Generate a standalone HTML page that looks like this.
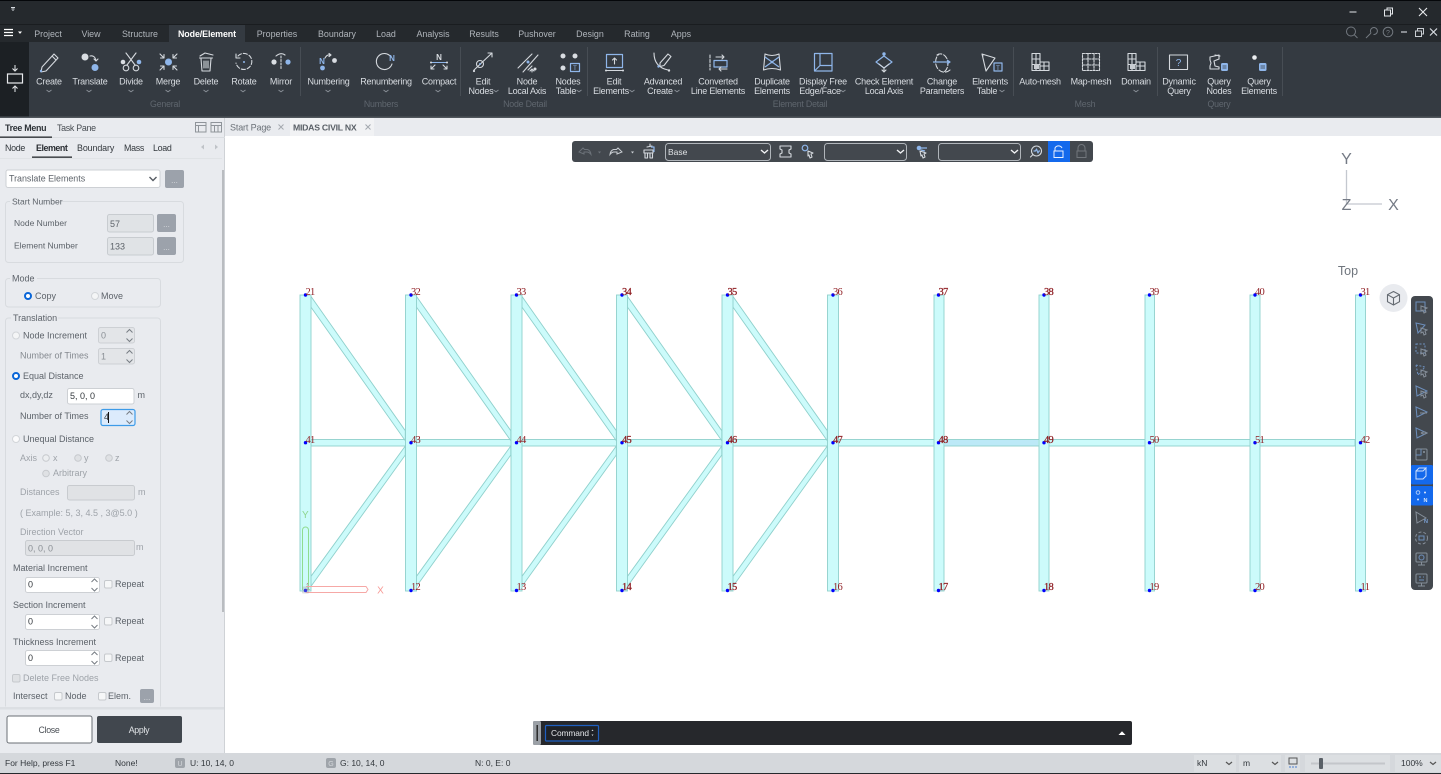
<!DOCTYPE html>
<html lang="en"><head><meta charset="utf-8"><title>MIDAS CIVIL NX</title>
<style>
html,body{margin:0;padding:0;background:#fff;width:1441px;height:774px;overflow:hidden}
svg{display:block;font-family:"Liberation Sans",sans-serif;filter:blur(.3px)}
.t{font-size:8.9px;fill:#b0b5bb;text-anchor:middle}
.r{font-size:9px;fill:#d9dde2;text-anchor:middle;letter-spacing:-.22px}
.g{font-size:8.8px;fill:#5f666e;text-anchor:middle;letter-spacing:-.2px}
.p{font-size:9px;fill:#5d636a}
.dk{font-size:9px;fill:#33383d}
.dis{font-size:9px;fill:#9ea3a9}
.n{font-family:"Liberation Serif",serif;font-size:10.5px;fill:#8f1d22;letter-spacing:-.7px}
.nb{stroke:#8f1d22;stroke-width:.25}
.i{fill:none;stroke:#d5d9de;stroke-width:1.1;stroke-linecap:round;stroke-linejoin:round}
.b{fill:none;stroke:#8fb6ea;stroke-width:1.2;stroke-linejoin:round}
.w{fill:#d9dde2}.u{fill:#8fb6ea}
.si{fill:none;stroke:#868f9a;stroke-width:1}
.sb{fill:none;stroke:#6d8fbc;stroke-width:1}
.col{fill:#ccfbfb;stroke:#8fd0cc;stroke-width:.9}
.s{font-size:8.5px;fill:#33383d}
.st{font-size:8.9px;letter-spacing:-.3px}
</style></head><body>
<svg width="1441" height="774" viewBox="0 0 1441 774" xmlns="http://www.w3.org/2000/svg">
<defs>
<path id="ch" d="M-2.5 0 L0 1.8 L2.5 0" fill="none" stroke="#8a9097" stroke-width=".9"/>
<path id="dc" d="M-3.5 -1.5 L0 2 L3.5 -1.5" fill="none" stroke="#555b62" stroke-width="1.4"/>
<g id="spin"><path d="M-3 -3 L0 -6 L3 -3 M-3 3 L0 6 L3 3" fill="none" stroke="#777d84" stroke-width="1"/></g>
<g id="db"><rect width="19" height="18" rx="2" fill="#9ca2ab"/><text x="9.5" y="13" font-size="8" fill="#d7dade" text-anchor="middle">...</text></g>
<g id="diag"><polygon class="col" points="310.7,296 405.3,430.7 405.3,440.7 310.7,306.7"/><polygon class="col" points="405.3,446 310.7,576.7 310.7,586.7 405.3,455"/></g>
<g id="node"><circle r="1.7" fill="#0000ff"/></g>
</defs>

<!-- base -->
<rect width="1441" height="774" fill="#fff"/>
<!-- title + tab bars -->
<rect width="1441" height="42" fill="#25292d"/>
<rect width="1441" height="1" fill="#05070a"/>
<rect y="24" width="1441" height="1" fill="#1a1d20"/>
<rect y="42" width="1441" height="75" fill="#343a41"/>
<rect y="42" width="29" height="75" fill="#1c2024"/>
<rect y="116.5" width="1441" height="1.5" fill="#50565c"/>
<rect x="169" y="25" width="76" height="17" fill="#343a41"/>
<path d="M11 7.5h4M11.5 9h3M12.5 10.5h1" stroke="#d9dde2" stroke-width="1"/>
<path d="M4 29.5h9M4 32.5h9M4 35.5h9" stroke="#fff" stroke-width="1.3"/><path d="M18 31.5h4l-2 2.4z" fill="#fff"/>
<path d="M1349.5 12h7M1384.5 10h6v6h-6zM1387 10v-2h5.500v6h-1.500" stroke="#e4e7ea" fill="none"/>
<path d="M1419 8l8 8M1427 8l-8 8" stroke="#e8eaed" stroke-width="1.100"/>
<circle cx="1351" cy="31.500" r="4.500" fill="none" stroke="#737980"/><path d="M1354.500 35l3 3" stroke="#737980"/>
<path d="M1366 38l5-5M1371 33a3.500 3.500 0 1 1 2.500 1.500" fill="none" stroke="#737980"/>
<circle cx="1388" cy="32" r="4.800" fill="none" stroke="#737980"/><text x="1388" y="35" font-size="7" fill="#737980" text-anchor="middle">?</text>
<path d="M1401 32h6" stroke="#c9cdd2" stroke-width="1.200"/><path d="M1415.500 31h6v5.500h-6zM1417.500 31v-2.500h6v5.500h-2" fill="none" stroke="#c9cdd2"/><path d="M1430 28.500l7 7M1437 28.500l-7 7" stroke="#d9dde2" stroke-width="1.200"/>

<text class="t" x="48" y="37">Project</text><text class="t" x="91" y="37">View</text><text class="t" x="140" y="37">Structure</text>
<text class="t" x="207" y="37" style="font-weight:700;fill:#fff;letter-spacing:-.1px">Node/Element</text>
<text class="t" x="277" y="37">Properties</text><text class="t" x="337" y="37">Boundary</text><text class="t" x="386" y="37">Load</text><text class="t" x="433" y="37">Analysis</text><text class="t" x="484" y="37">Results</text><text class="t" x="537" y="37">Pushover</text><text class="t" x="590" y="37">Design</text><text class="t" x="637" y="37">Rating</text><text class="t" x="681" y="37">Apps</text>

<!-- left ribbon strip -->
<rect x="7.500" y="74" width="15" height="9" fill="none" stroke="#e9ebee" stroke-width="1.200"/>
<path d="M15 65v5M12.500 68.500l2.500 2.500l2.500-2.500M15 92v-5M12.500 88.500l2.500-2.500l2.500 2.500" fill="none" stroke="#e9ebee"/>

<!-- ribbon separators -->
<g stroke="#474d54"><path d="M300.500 47v49M460.500 47v49M587.500 47v49M1013.500 47v49M1157.500 47v49M1282.500 47v49"/></g>
<!-- ribbon labels -->
<text class="r" x="49" y="84.500">Create</text><text class="r" x="90" y="84.500">Translate</text><text class="r" x="131" y="84.500">Divide</text><text class="r" x="168" y="84.500">Merge</text><text class="r" x="206" y="84.500">Delete</text><text class="r" x="244" y="84.500">Rotate</text><text class="r" x="281" y="84.500">Mirror</text>
<text class="r" x="328.500" y="84.500">Numbering</text><text class="r" x="386" y="84.500">Renumbering</text><text class="r" x="439" y="84.500">Compact</text>
<text class="r" x="483" y="84.500">Edit</text><text class="r" x="481" y="94">Nodes</text>
<text class="r" x="527" y="84.500">Node</text><text class="r" x="527" y="94">Local Axis</text>
<text class="r" x="568" y="84.500">Nodes</text><text class="r" x="566" y="94">Table</text>
<text class="r" x="614" y="84.500">Edit</text><text class="r" x="611" y="94">Elements</text>
<text class="r" x="663" y="84.500">Advanced</text><text class="r" x="660" y="94">Create</text>
<text class="r" x="718" y="84.500">Converted</text><text class="r" x="718" y="94">Line Elements</text>
<text class="r" x="772" y="84.500">Duplicate</text><text class="r" x="772" y="94">Elements</text>
<text class="r" x="823" y="84.500">Display Free</text><text class="r" x="820" y="94">Edge/Face</text>
<text class="r" x="884" y="84.500">Check Element</text><text class="r" x="884" y="94">Local Axis</text>
<text class="r" x="942" y="84.500">Change</text><text class="r" x="942" y="94">Parameters</text>
<text class="r" x="990" y="84.500">Elements</text><text class="r" x="987" y="94">Table</text>
<text class="r" x="1040" y="84.500">Auto-mesh</text><text class="r" x="1091" y="84.500">Map-mesh</text><text class="r" x="1136" y="84.500">Domain</text>
<text class="r" x="1179" y="84.500">Dynamic</text><text class="r" x="1179" y="94">Query</text>
<text class="r" x="1219" y="84.500">Query</text><text class="r" x="1219" y="94">Nodes</text>
<text class="r" x="1259" y="84.500">Query</text><text class="r" x="1259" y="94">Elements</text>
<text class="g" x="165" y="107">General</text><text class="g" x="381" y="107">Numbers</text><text class="g" x="525" y="107">Node Detail</text><text class="g" x="800" y="107">Element Detail</text><text class="g" x="1085" y="107">Mesh</text><text class="g" x="1219" y="107">Query</text>
<!-- chevrons -->
<use href="#ch" x="49" y="90"/><use href="#ch" x="89" y="90"/><use href="#ch" x="131" y="90"/><use href="#ch" x="168" y="90"/><use href="#ch" x="206" y="90"/><use href="#ch" x="243" y="90"/><use href="#ch" x="281" y="90"/><use href="#ch" x="328" y="90"/><use href="#ch" x="386" y="90"/><use href="#ch" x="438" y="90"/><use href="#ch" x="1136" y="90"/>
<use href="#ch" x="496" y="90"/><use href="#ch" x="579" y="90"/><use href="#ch" x="632" y="90"/><use href="#ch" x="677" y="90"/><use href="#ch" x="843" y="90"/><use href="#ch" x="1002" y="90"/>

<!-- ribbon icons -->
<path class="i" d="M42 67l12-13 4 4-12 13-5 1z M52 56l4 4"/><circle cx="41" cy="71" r="1.200" class="u"/>
<circle cx="85" cy="57" r="3.500" class="w"/><circle cx="95" cy="67.500" r="3.500" class="u"/><path class="i" d="M90 56q5-1 6 5M94 59l2 2 2-2"/>
<path class="i" d="M126 53l9 12M136 53l-9 12"/><circle class="i" cx="126" cy="68" r="2.800"/><circle class="i" cx="136" cy="68" r="2.800"/><circle cx="123" cy="62" r="2.300" class="w"/><circle cx="139" cy="62" r="2.300" class="u"/>
<circle cx="168.500" cy="62" r="3.500" class="u"/><path class="i" d="M160 54l4 4M164 54.500v3.500h-3.500M177 54l-4 4M173 54.500v3.500h3.500M160 70l4-4M164 69.500v-3.500h-3.500M177 70l-4-4M173 69.500v-3.500h3.500"/>
<path class="i" d="M199.500 58h13M201 58.500l1 12.500h8l1-12.500M204 61v7M206 61v7M208 61v7M200 56l5-3 8 2"/>
<path class="i" stroke-dasharray="4 2" d="M238 56a8 8 0 1 1 -2 7"/><path class="i" d="M236 54v4h4"/><circle cx="244" cy="62" r="1" class="u"/>
<circle cx="274" cy="62" r="2.600" class="w"/><circle cx="288" cy="62" r="2.600" class="u"/><path class="i" stroke-dasharray="2 1.500" d="M281 56v14"/><path class="i" d="M276 56q5-4 9-1"/>
<text x="322" y="64" font-size="8" font-weight="700" fill="#8fb6ea" text-anchor="middle">N</text><circle cx="322.500" cy="68" r="2.400" class="u"/><circle cx="334.500" cy="60.500" r="2.400" class="w"/><path class="i" d="M325 58q2-4 6-3M329 53.500l2 1.500-2 1.500"/>
<path class="i" d="M391 57a8 8 0 1 0 1 7"/><text x="392" y="61" font-size="8" font-weight="700" fill="#8fb6ea" text-anchor="middle">N</text>
<text x="439" y="60" font-size="8" font-weight="700" fill="#d9dde2" text-anchor="middle">N</text><path d="M431 62.500h16" stroke="#8fb6ea" stroke-width="1"/><circle cx="431" cy="62.500" r="1" class="w"/><circle cx="447" cy="62.500" r="1" class="w"/><path class="i" d="M435 65l-4 4M431 66v3h3M443 65l4 4M447 66v3h-3"/>
<path class="i" d="M474 70l18-17M488 53h4v4"/><circle class="i" cx="480" cy="64" r="3.500"/><circle cx="480" cy="64" r="1" class="u"/><circle cx="474" cy="71" r="1.100" class="w"/>
<path class="i" d="M518 68l14-14M523 72l15-17M528 70l4-4"/><circle cx="528" cy="62" r="1.500" class="u"/><circle cx="535" cy="69" r="1.500" class="w"/><path class="i" d="M532 72v-3M530 71l2-2 2 2"/>
<circle cx="563" cy="56" r="2.500" class="w"/><circle cx="575" cy="56" r="2.500" class="w"/><circle cx="563" cy="68" r="2.500" class="w"/><rect class="b" x="570.500" y="63.500" width="9" height="8"/><text x="575" y="70" font-size="6" fill="#8fb6ea" text-anchor="middle">T</text>
<rect class="b" x="606.500" y="54.500" width="16" height="13"/><path class="i" d="M606 70.500h17M614.500 64v-6M612.500 60l2-2 2 2"/><circle cx="606" cy="70.500" r="1" class="w"/><circle cx="623" cy="70.500" r="1" class="w"/>
<path class="i" d="M654 53q0 14 14 17"/><path class="i" d="M660 63l8-9 3 2.500-7 9-4 1z"/><circle cx="658.500" cy="66.500" r="1.200" class="u"/><circle cx="669" cy="70.500" r="1.200" class="w"/>
<rect class="b" x="714" y="60.500" width="13" height="6.500"/><path class="i" stroke-dasharray="3 1.500" d="M710 55v15"/><path class="i" d="M716 57h8M722 55l2 2-2 2M727 69h-8M721 67l-2 2 2 2"/>
<path class="i" d="M765 54l-1.500 16M779 54l1.500 16M765 54q7 3 14 0M763.500 70q8.500-3 17 0"/><path class="b" d="M765 57l14 10M779 57l-14 10"/><circle cx="772" cy="62" r="1.300" class="u"/>
<rect class="b" x="814.500" y="53.500" width="17.500" height="17.500"/><path class="b" d="M820 53.500v12h12M820 65.500l-5.500 5.500"/>
<path class="b" d="M884 56l8 6-8 6-8-6z"/><circle cx="884" cy="54" r="1.700" class="u"/><path class="i" d="M884 68v4M882 70l2 2 2-2M879 64l5 4 5-4"/>
<path class="i" stroke-dasharray="5 2" d="M937 55a7 9 0 0 1 7 17"/><path class="i" stroke-dasharray="5 2" d="M950 70a7 8 0 0 1-11-16"/><path class="b" d="M933 62h17M947 60l3 2-3 2"/>
<path class="i" d="M982 54l13 4-9 13zM982 54l1 2"/><rect class="b" x="994" y="63" width="8" height="8"/><text x="998" y="70" font-size="6" fill="#8fb6ea" text-anchor="middle">T</text>
<path class="i" d="M1032 53.500h8v17h-8zM1032 59h8M1032 64.500h8M1036 53.500v17M1040 62h9v8.500h-9M1044 62v8.500M1040 66h9"/><rect x="1034" y="64" width="5" height="5" fill="#c8ccd1"/>
<path class="i" stroke-dasharray="2 1.200" d="M1082.500 53.500h17v17h-17zM1082.500 59h17M1082.500 65h17M1088 53.500v17M1094 53.500v17"/>
<path class="i" d="M1128 53.500h8v17h-8zM1128 59h8M1128 64.500h8M1132 53.500v17M1136 62h9v8.500h-9M1140 62v8.500M1136 66h9"/><rect x="1130" y="64" width="5" height="5" fill="#c8ccd1"/>
<rect x="1169.500" y="55" width="18" height="14.500" class="i"/><text x="1178.500" y="66" font-size="10" fill="#8fb6ea" text-anchor="middle">?</text>
<path class="i" d="M1210 57l9-2v4l-5 2 1 5 4 1v2l-9 0v-3l1-3-1-3zM1215 55l5 1"/><rect x="1221" y="63" width="7" height="8" rx="1.500" fill="#8fb6ea"/><path d="M1222.500 66h4M1222.500 68h4" stroke="#343a41" stroke-width=".7"/>
<circle cx="1254.500" cy="57.500" r="2.300" fill="#eceef0"/><rect x="1259" y="63" width="7.500" height="8" rx="1.500" fill="#8fb6ea"/><path d="M1260.500 66h4.500M1260.500 68h4.500" stroke="#343a41" stroke-width=".7"/>

<!-- doc tab bar -->
<rect x="225" y="118" width="1216" height="18" fill="#e9ebef"/>
<rect x="290" y="118" width="84" height="18" fill="#f1f2f4"/>
<text x="230" y="130.500" font-size="9" fill="#6b7178" style="letter-spacing:-.15px">Start Page</text><path d="M278.500 124.500l5 5M283.500 124.500l-5 5" stroke="#a3a8ae"/>
<text x="293" y="130.500" font-size="8.700" font-weight="700" fill="#5a6067" style="letter-spacing:-.25px">MIDAS CIVIL NX</text><path d="M365.500 124.500l5 5M370.500 124.500l-5 5" stroke="#a3a8ae"/>

<!-- left panel -->
<rect y="118" width="225" height="635" fill="#e9ebef"/>
<rect x="224" y="118" width="1" height="635" fill="#cfd2d6"/>
<rect y="137" width="225" height="1" fill="#dadde1"/>
<rect y="136.500" width="52" height="1.300" fill="#23272b"/>
<text x="5" y="131" class="st" font-weight="700" fill="#2e3338">Tree Menu</text>
<text x="57" y="131" class="st" fill="#474c52">Task Pane</text>
<rect x="195.500" y="122.500" width="10.500" height="9.500" fill="none" stroke="#8f949a"/><path d="M195.500 125.500h10.500M198.500 125.500v6.500" stroke="#8f949a"/>
<rect x="211" y="122.500" width="10.500" height="9.500" fill="none" stroke="#8f949a"/><path d="M211 125.500h10.500M214.500 125.500v6.500M218 125.500v6.500" stroke="#8f949a"/>
<text x="5" y="151" class="st" fill="#33383d">Node</text>
<text x="36" y="151" class="st" font-weight="700" fill="#2a2e33" style="letter-spacing:-.45px">Element</text>
<text x="77" y="151" class="st" fill="#33383d" style="letter-spacing:-.1px">Boundary</text>
<text x="124" y="151" class="st" fill="#33383d">Mass</text>
<text x="153" y="151" class="st" fill="#33383d">Load</text>
<rect x="32" y="156.500" width="40" height="1.300" fill="#23272b"/>
<rect y="158" width="222" height="1" fill="#e0e3e6"/>
<path d="M204 144.500v5l-3-2.500zM215 144.500v5l3-2.500z" fill="#bfc3c8"/>
<rect x="222" y="170" width="2" height="442" fill="#b9bcc0"/>

<rect x="6" y="170" width="154" height="17.500" rx="2" fill="#fff" stroke="#cdd0d4"/>
<text x="9" y="181.500" class="p" style="font-size:8.900px">Translate Elements</text><use href="#dc" x="153" y="178.500"/>
<use href="#db" x="165" y="170"/>

<rect x="5.500" y="201.500" width="178" height="61" rx="3" fill="none" stroke="#d8dbdf"/>
<rect x="10" y="198" width="51" height="8" fill="#e9ebef"/><text x="12" y="204.500" class="p" style="font-size:8.500px">Start Number</text>
<text x="14" y="226" class="p" style="font-size:8.500px">Node Number</text><rect x="107.500" y="214.500" width="46" height="17.500" rx="2" fill="#e0e3e6" stroke="#c8ccd0"/><text x="110" y="227" class="p" fill="#666">57</text><use href="#db" x="157" y="214"/>
<text x="14" y="248.500" class="p" style="font-size:8.500px">Element Number</text><rect x="107.500" y="237.500" width="46" height="17.500" rx="2" fill="#e0e3e6" stroke="#c8ccd0"/><text x="110" y="249.500" class="p">133</text><use href="#db" x="157" y="237"/>

<rect x="5.500" y="278.500" width="155" height="28.500" rx="3" fill="none" stroke="#d8dbdf"/>
<rect x="10" y="275" width="27" height="8" fill="#e9ebef"/><text x="12" y="281.500" class="p">Mode</text>
<circle cx="28" cy="296" r="3" fill="#fff" stroke="#0a66d8" stroke-width="2"/><text x="35" y="299" class="p">Copy</text>
<circle cx="95" cy="296" r="3.500" fill="#f4f5f6" stroke="#d2d5d9"/><text x="101" y="299" class="p">Move</text>

<path d="M5.500 706.500V321a3 3 0 0 1 3-3H157.500a3 3 0 0 1 3 3V706.500" fill="none" stroke="#d8dbdf"/>
<rect x="11" y="314" width="47" height="8" fill="#e9ebef"/><text x="13" y="321" class="p">Translation</text>

<circle cx="16" cy="335.500" r="3.500" fill="#f4f5f6" stroke="#d2d5d9"/><text x="23" y="338.500" class="p">Node Increment</text>
<rect x="98.500" y="327.500" width="36" height="15.500" rx="2" fill="#e3e5e8" stroke="#cdd0d4"/><text x="101" y="338.500" class="dis" style="fill:#8a8f95">0</text><use href="#spin" x="129.500" y="335.500"/>
<text x="20" y="358.500" class="dis" style="fill:#858a90">Number of Times</text>
<rect x="98.500" y="348.500" width="36" height="15.500" rx="2" fill="#e3e5e8" stroke="#cdd0d4"/><text x="101" y="359.500" class="dis" style="fill:#8a8f95">1</text><use href="#spin" x="129.500" y="356.500"/>

<circle cx="16" cy="376" r="3" fill="#fff" stroke="#0a66d8" stroke-width="2"/><text x="23" y="379" class="p">Equal Distance</text>
<text x="20" y="398" class="p">dx,dy,dz</text><rect x="67.500" y="388.500" width="66.500" height="15.500" rx="2" fill="#fff" stroke="#cdd0d4"/><text x="70" y="399" class="dk">5, 0, 0</text><text x="137.500" y="398" class="p">m</text>
<text x="20" y="419" class="p">Number of Times</text>
<rect x="101" y="409.500" width="34" height="16" rx="2" fill="#dcebfc" stroke="#3d9be8" stroke-width="1.200"/><text x="104" y="420" class="dk">4</text><path d="M108.500 412v11" stroke="#111"/><use href="#spin" x="129.500" y="417.500"/>

<circle cx="16" cy="439" r="3.500" fill="#fbfbfc" stroke="#d2d5d9"/><text x="23" y="442" class="p">Unequal Distance</text>
<text x="20" y="461" class="dis">Axis</text>
<circle cx="46" cy="458" r="3.300" fill="#eceef0" stroke="#c6c9cd"/><text x="53" y="461" class="dis">x</text>
<circle cx="78" cy="458" r="3.300" fill="#dfe1e4" stroke="#c6c9cd"/><text x="84" y="461" class="dis">y</text>
<circle cx="109" cy="458" r="3.300" fill="#dfe1e4" stroke="#c6c9cd"/><text x="115" y="461" class="dis">z</text>
<circle cx="46" cy="473.500" r="3.300" fill="#dfe1e4" stroke="#c6c9cd"/><text x="53" y="476" class="dis">Arbitrary</text>
<text x="20" y="495" class="dis">Distances</text><rect x="67.500" y="485.500" width="67" height="14.500" rx="2" fill="#e0e2e5" stroke="#c8cbcf"/><text x="138" y="495" class="dis">m</text>
<text x="20" y="516" class="dis">( Example: 5, 3, 4.5 , 3@5.0 )</text>
<text x="20" y="535" class="dis">Direction Vector</text>
<rect x="25.500" y="540.500" width="109" height="15" rx="2" fill="#e0e2e5" stroke="#c8cbcf"/><text x="28" y="551.500" class="dis" style="fill:#8a8f95">0, 0, 0</text><text x="136" y="550" class="dis">m</text>

<text x="13" y="571" class="p">Material Increment</text>
<rect x="25.500" y="577.500" width="74" height="15" rx="2" fill="#fff" stroke="#cdd0d4"/><text x="28" y="587.500" class="dk">0</text><use href="#spin" x="94.500" y="585"/>
<rect x="104.500" y="580.500" width="7.500" height="7.500" rx="1.500" fill="#f6f7f8" stroke="#c6c9cd"/><text x="115" y="587" class="p">Repeat</text>
<text x="13" y="608" class="p">Section Increment</text>
<rect x="25.500" y="614.500" width="74" height="15" rx="2" fill="#fff" stroke="#cdd0d4"/><text x="28" y="624.500" class="dk">0</text><use href="#spin" x="94.500" y="622"/>
<rect x="104.500" y="617.500" width="7.500" height="7.500" rx="1.500" fill="#f6f7f8" stroke="#c6c9cd"/><text x="115" y="624" class="p">Repeat</text>
<text x="13" y="645" class="p">Thickness Increment</text>
<rect x="25.500" y="650.500" width="74" height="15" rx="2" fill="#fff" stroke="#cdd0d4"/><text x="28" y="661" class="dk">0</text><use href="#spin" x="94.500" y="658"/>
<rect x="104.500" y="654" width="7.500" height="7.500" rx="1.500" fill="#f6f7f8" stroke="#c6c9cd"/><text x="115" y="661" class="p">Repeat</text>
<rect x="12.500" y="674.500" width="7.500" height="7.500" rx="1.500" fill="#dfe1e4" stroke="#c6c9cd"/><text x="23" y="681" class="dis">Delete Free Nodes</text>
<text x="13" y="699" class="p">Intersect</text>
<rect x="54.500" y="692.500" width="7.500" height="7.500" rx="1.500" fill="#f6f7f8" stroke="#c6c9cd"/><text x="65" y="699" class="p">Node</text>
<rect x="98.500" y="692.500" width="7.500" height="7.500" rx="1.500" fill="#f6f7f8" stroke="#c6c9cd"/><text x="108" y="699" class="p">Elem.</text>
<rect x="140" y="689" width="14" height="14" rx="2" fill="#9ca2ab"/><text x="147" y="700" font-size="8" fill="#d7dade" text-anchor="middle">...</text>
<rect y="707" width="224" height="2.500" fill="#dcdfe3"/>
<rect x="7" y="716" width="85" height="27" rx="2" fill="#fff" stroke="#6a6f75"/><text x="49" y="733" font-size="8.800" fill="#4a4f55" text-anchor="middle" style="letter-spacing:-.3px">Close</text>
<rect x="97" y="716" width="85" height="27" rx="2" fill="#41474e"/><text x="139" y="733" font-size="8.800" fill="#e0e3e6" text-anchor="middle" style="letter-spacing:-.3px">Apply</text>

<!-- toolbar -->
<rect x="572" y="141" width="521" height="21" rx="3" fill="#43484e"/>
<path d="M579 152l4-4 1.500 1.500h3q3 1 3.500 5q-2-2.500-4-2.500h-3v2z" fill="none" stroke="#6c7279"/><path d="M598 151.500h3l-1.500 2z" fill="#6c7279"/>
<path d="M622 152l-4-4-1.500 1.500h-3q-3 1-3.500 5q2-2.500 4-2.500h3v2z" fill="none" stroke="#cbcfd4"/><path d="M631 151.500h3l-1.500 2z" fill="#cbcfd4"/>
<path class="i" d="M644 150h9v3h-9zM645 153h2.500v5h-2.500zM650 153h2.500v5h-2.500zM647 147l5-1M650 146v-2"/><path class="b" d="M651 147h3v5"/>
<rect x="665.500" y="143.500" width="105" height="17" rx="3" fill="#43484e" stroke="#b0b5ba"/><text x="668" y="155" font-size="8.500" fill="#e0e3e6">Base</text><path d="M761 150l3.500 3 3.500-3" fill="none" stroke="#f0f2f4" stroke-width="1.400"/>
<path class="i" d="M780 146h11v3l-2 1v3l2 1v3h-11v-3l2-1v-3l-2-1z"/>
<circle cx="805" cy="148" r="2.800" class="b"/><path class="i" d="M808 151l5 2-2 1 1 3-2 1-1-3-1 1z"/>
<rect x="824.500" y="143.500" width="82" height="17" rx="3" fill="#43484e" stroke="#b0b5ba"/><path d="M897 150l3.500 3 3.500-3" fill="none" stroke="#f0f2f4" stroke-width="1.400"/>
<circle cx="919" cy="148" r="2.300" class="u"/><path class="b" d="M921 148h6M921 150l4 1"/><path class="i" d="M920 151l6 2-2 1 1 3-2 1-1-3-1 1z"/>
<rect x="938.500" y="143.500" width="82" height="17" rx="3" fill="#43484e" stroke="#b0b5ba"/><path d="M1011 150l3.500 3 3.500-3" fill="none" stroke="#f0f2f4" stroke-width="1.400"/>
<circle cx="1036.500" cy="151" r="5" class="i"/><path class="b" d="M1033.500 151h2l1-2 1.500 4 1-2h1"/><path class="i" d="M1032.500 155l-2 2"/>
<rect x="1048" y="141" width="22" height="21" fill="#1469ec"/><path d="M1055 151v-3a4 4 0 0 1 7 0" fill="none" stroke="#e8f0ff"/><rect x="1054" y="151" width="9" height="6.500" fill="none" stroke="#e8f0ff"/>
<path d="M1078 151v-3a3.500 3.500 0 0 1 7 0v3" fill="none" stroke="#71767c"/><rect x="1077" y="151" width="9" height="6.500" fill="none" stroke="#71767c"/>

<!-- model -->
<g>
<rect class="col" x="311" y="439.500" width="1044" height="6.500"/>
<rect x="945" y="440" width="93" height="5.500" fill="#bce9f7"/>
<use href="#diag"/><use href="#diag" x="105.500"/><use href="#diag" x="211"/><use href="#diag" x="316.500"/><use href="#diag" x="422"/>
<rect class="col" x="300" y="295" width="11" height="296"/><rect class="col" x="405.500" y="295" width="11" height="296"/><rect class="col" x="511" y="295" width="11" height="296"/><rect class="col" x="616.500" y="295" width="11" height="296"/><rect class="col" x="722" y="295" width="11" height="296"/><rect class="col" x="827.500" y="295" width="11" height="296"/><rect class="col" x="934" y="295" width="10" height="296"/><rect class="col" x="1039" y="295" width="10" height="296"/><rect class="col" x="1145" y="295" width="9.500" height="296"/><rect class="col" x="1250" y="295" width="10" height="296"/><rect class="col" x="1355.500" y="295" width="10" height="296"/>
<!-- nodes -->
<use href="#node" x="305.500" y="295"/><use href="#node" x="411" y="295"/><use href="#node" x="516.500" y="295"/><use href="#node" x="622" y="295"/><use href="#node" x="727.500" y="295"/><use href="#node" x="833" y="295"/><use href="#node" x="938.500" y="295"/><use href="#node" x="1044" y="295"/><use href="#node" x="1149.500" y="295"/><use href="#node" x="1255" y="295"/><use href="#node" x="1360.500" y="295"/>
<use href="#node" x="305.500" y="442.700"/><use href="#node" x="411" y="442.700"/><use href="#node" x="516.500" y="442.700"/><use href="#node" x="622" y="442.700"/><use href="#node" x="727.500" y="442.700"/><use href="#node" x="833" y="442.700"/><use href="#node" x="938.500" y="442.700"/><use href="#node" x="1044" y="442.700"/><use href="#node" x="1149.500" y="442.700"/><use href="#node" x="1255" y="442.700"/><use href="#node" x="1360.500" y="442.700"/>
<use href="#node" x="305.500" y="590.500"/><use href="#node" x="411" y="590.500"/><use href="#node" x="516.500" y="590.500"/><use href="#node" x="622" y="590.500"/><use href="#node" x="727.500" y="590.500"/><use href="#node" x="833" y="590.500"/><use href="#node" x="938.500" y="590.500"/><use href="#node" x="1044" y="590.500"/><use href="#node" x="1149.500" y="590.500"/><use href="#node" x="1255" y="590.500"/><use href="#node" x="1360.500" y="590.500"/>
<!-- labels -->
<text class="n" x="305.500" y="295">21</text><text class="n" x="411" y="295">32</text><text class="n" x="516.500" y="295">33</text><text class="n nb" x="622" y="295">34</text><text class="n nb" x="727.500" y="295">35</text><text class="n" x="833" y="295">36</text><text class="n nb" x="938.500" y="295">37</text><text class="n nb" x="1044" y="295">38</text><text class="n" x="1149.500" y="295">39</text><text class="n" x="1255" y="295">40</text><text class="n" x="1360.500" y="295">31</text>
<text class="n" x="305.500" y="443">41</text><text class="n" x="411" y="443">43</text><text class="n" x="516.500" y="443">44</text><text class="n nb" x="622" y="443">45</text><text class="n nb" x="727.500" y="443">46</text><text class="n nb" x="833" y="443">47</text><text class="n nb" x="938.500" y="443">48</text><text class="n nb" x="1044" y="443">49</text><text class="n" x="1149.500" y="443">50</text><text class="n" x="1255" y="443">51</text><text class="n" x="1360.500" y="443">42</text>
<text class="n" x="305.500" y="590">1</text><text class="n" x="411" y="590">12</text><text class="n" x="516.500" y="590">13</text><text class="n nb" x="622" y="590">14</text><text class="n nb" x="727.500" y="590">15</text><text class="n" x="833" y="590">16</text><text class="n nb" x="938.500" y="590">17</text><text class="n nb" x="1044" y="590">18</text><text class="n" x="1149.500" y="590">19</text><text class="n" x="1255" y="590">20</text><text class="n" x="1360.500" y="590">11</text>
<!-- origin axes -->
<path d="M302.500 590V530a3 3 0 0 1 6 0V590" fill="none" stroke="#8fdc8f"/>
<text x="305.300" y="518" font-size="10" fill="#8fd68f" text-anchor="middle">Y</text>
<path d="M306 586.500H366l2 3-2 3H306" fill="none" stroke="#f6a8a6"/>
<text x="380.500" y="593.500" font-size="10" fill="#f79a96" text-anchor="middle">X</text>
<rect x="302" y="586.500" width="7" height="7" rx="1" fill="#9aa0a6" opacity=".35"/>
</g>

<!-- view axes -->
<path d="M1346.500 170v34H1382" fill="none" stroke="#c4c8cf" stroke-width="1.300"/>
<text x="1346.500" y="164" font-size="16" fill="#747a85" text-anchor="middle">Y</text>
<text x="1346.500" y="210" font-size="16" fill="#747a85" text-anchor="middle">Z</text>
<text x="1393.500" y="210" font-size="16" fill="#747a85" text-anchor="middle">X</text>
<text x="1348" y="275" font-size="12.500" fill="#6f757d" text-anchor="middle">Top</text>
<circle cx="1393.500" cy="298" r="14" fill="#e9ebef"/>
<path d="M1393.500 291.500l6 3.200v7l-6 3.300-6-3.300v-7zM1387.500 294.700l6 3.300 6-3.300M1393.500 298v7" fill="none" stroke="#646a71" stroke-width="1.100"/>

<!-- side toolbar -->
<rect x="1411" y="296" width="22" height="294" rx="4" fill="#43484e"/>
<rect x="1411" y="465" width="22" height="19.500" rx="1.500" fill="#1469ec"/>
<rect x="1411" y="486" width="22" height="19.500" rx="1.500" fill="#1469ec"/>
<rect class="sb" x="1416" y="302" width="9" height="9"/><path class="si" d="M1421 306l6 2-2 1 1 3-2 1-1-3-2 1z"/>
<path class="sb" d="M1416 323l9 2-7 8z"/><path class="si" d="M1421 328l6 2-2 1 1 3-2 1-1-3-2 1z"/>
<path class="sb" stroke-dasharray="2 1.500" d="M1416 344h9v9h-9z"/><path class="si" d="M1421 349l6 2-2 1 1 3-2 1-1-3-2 1z"/>
<path class="sb" stroke-dasharray="2 1.500" d="M1416 365l9 2-7 8z"/><path class="si" d="M1421 370l6 2-2 1 1 3-2 1-1-3-2 1z"/>
<path class="sb" d="M1416 386l11 5-10 5z"/><path class="si" d="M1421 391l6 2-2 1 1 3-2 1-1-3-2 1z"/>
<path class="sb" d="M1416 407l11 5-10 5z"/><path class="si" d="M1420 413h7"/>
<path class="sb" d="M1416 428l11 5-10 5z"/><path class="si" d="M1421 433q3-2 6 0q-3 2-6 0"/>
<rect class="si" x="1416" y="449" width="11" height="11" rx="1"/><path class="sb" d="M1416 455h5v-6"/><circle cx="1424" cy="452" r="1" fill="#8b95a1"/>
<path d="M1416 471h7l3-3v8l-3 3h-7zM1416 471l3-3h7" fill="none" stroke="#cfe0fb"/>
<circle cx="1418" cy="492.500" r="1.800" fill="none" stroke="#a9c7f7"/><circle cx="1425" cy="492.500" r="1" fill="#dbe7fb"/><circle cx="1418" cy="499.500" r="1" fill="#dbe7fb"/><text x="1425.500" y="502" font-size="5.500" font-weight="700" fill="#dbe7fb" text-anchor="middle">N</text>
<path class="si" d="M1416 512l10 6-9 5z"/><text x="1426" y="523" font-size="5.500" font-weight="700" fill="#7ca3d8" text-anchor="middle">N</text>
<circle class="si" cx="1421.500" cy="538" r="6" stroke-dasharray="3 2"/><rect class="sb" x="1419" y="536" width="5" height="4"/>
<rect class="si" x="1416" y="553" width="11" height="9" rx="1"/><circle class="sb" cx="1421.500" cy="557.500" r="2.500"/><path class="si" d="M1421.500 562v3M1418 565h7"/>
<rect class="si" x="1416" y="574" width="11" height="9" rx="1"/><path class="sb" d="M1419 577h2M1423 577h1M1419 580h5"/><path class="si" d="M1421.500 583v3M1418 586h7"/>

<!-- command bar -->
<rect x="533" y="721" width="599" height="24" rx="2" fill="#26282c"/>
<rect x="533" y="721" width="8" height="24" rx="1.500" fill="#9ba0a6"/><rect x="536.500" y="725" width="1.400" height="16" fill="#222"/>
<rect x="545.500" y="725.500" width="53" height="15.500" rx="1" fill="#1f2227" stroke="#1f5fc0" stroke-width="1.200"/>
<text x="551" y="736" font-size="8.400" fill="#e2e5e8" style="letter-spacing:-.1px">Command</text><path d="M591.500 731l1-1.500 1 1.500zM591.500 734.500l1 1.500 1-1.500z" fill="#d9dde2"/>
<path d="M1118.500 735h7l-3.500-3.800z" fill="#fff"/>

<!-- status bar -->
<rect y="753" width="1441" height="21" fill="#d5d8dc"/>
<rect y="773" width="1441" height="1" fill="#26292d"/>
<text x="5" y="766" class="s">For Help, press F1</text><text x="115" y="766" class="s">None!</text>
<rect x="175" y="758" width="10" height="10" rx="2" fill="#9fa4aa"/><text x="180" y="766" font-size="7" fill="#d5d8dc" text-anchor="middle">U</text><text x="190" y="766" class="s">U: 10, 14, 0</text>
<rect x="326" y="758" width="10" height="10" rx="2" fill="#9fa4aa"/><text x="331" y="766" font-size="7" fill="#d5d8dc" text-anchor="middle">G</text><text x="340" y="766" class="s">G: 10, 14, 0</text>
<text x="475" y="766" class="s">N: 0, E: 0</text>
<rect x="1194" y="755" width="42" height="17" fill="#dcdfe2"/><text x="1197" y="766" class="s">kN</text><path d="M1226 762l3 2.500 3-2.500" fill="none" stroke="#555" stroke-width="1.200"/>
<rect x="1239" y="755" width="42" height="17" fill="#dcdfe2"/><text x="1243" y="766" class="s">m</text><path d="M1272 762l3 2.500 3-2.500" fill="none" stroke="#555" stroke-width="1.200"/>
<rect x="1285" y="755" width="15" height="17" fill="#dcdfe2"/><rect x="1289" y="758" width="8" height="6" fill="none" stroke="#555"/><path d="M1289 767h8" stroke="#4d7fd0" stroke-dasharray="2 1"/>
<rect x="1305" y="755" width="85" height="17" fill="#dcdfe2"/><rect x="1311" y="762.500" width="74" height="2" fill="#c3c6ca"/><rect x="1319" y="758" width="4" height="11" rx="1" fill="#5a6067"/>
<rect x="1395" y="755" width="46" height="17" fill="#dcdfe2"/><text x="1401" y="766" class="s">100%</text><path d="M1430 762l3 2.500 3-2.500" fill="none" stroke="#555" stroke-width="1.200"/>
</svg>
</body></html>
